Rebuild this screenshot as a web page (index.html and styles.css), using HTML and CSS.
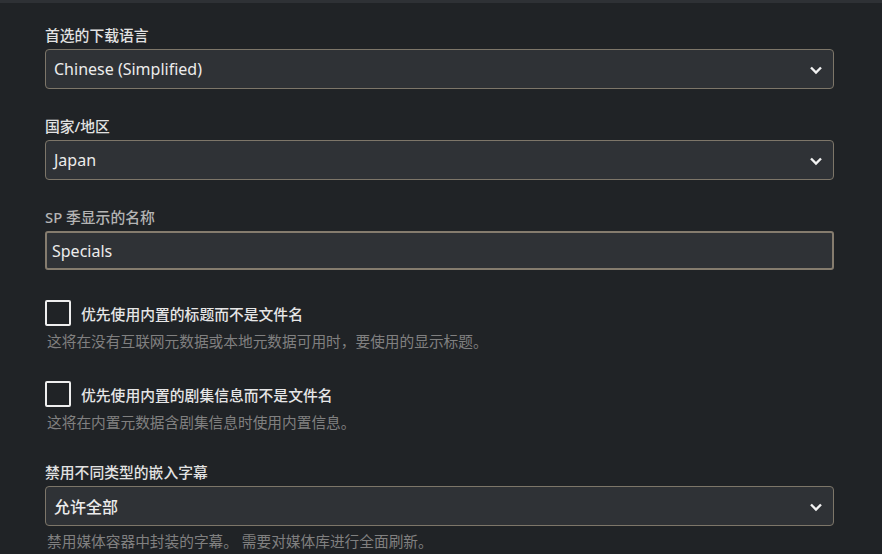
FILE: index.html
```html
<!DOCTYPE html>
<html lang="zh">
<head>
<meta charset="utf-8">
<link rel="stylesheet" href="styles.css">
</head>
<body>
<div class="topbar"></div>
<main class="form">
  <div class="field">
    <label class="label">首选的下载语言</label>
    <div class="select"><span>Chinese (Simplified)</span>
      <svg class="chev" width="14" height="10" viewBox="0 0 14 10"><path d="M2 2.5 L7 7.5 L12 2.5" fill="none" stroke="#f2f2f2" stroke-width="2.4"/></svg>
    </div>
  </div>
  <div class="field">
    <label class="label">国家/地区</label>
    <div class="select"><span>Japan</span>
      <svg class="chev" width="14" height="10" viewBox="0 0 14 10"><path d="M2 2.5 L7 7.5 L12 2.5" fill="none" stroke="#f2f2f2" stroke-width="2.4"/></svg>
    </div>
  </div>
  <div class="field">
    <label class="label dim">SP 季显示的名称</label>
    <div class="input"><span>Specials</span></div>
  </div>
  <div class="check-field">
    <div class="check-row"><span class="box"></span><span class="check-label">优先使用内置的标题而不是文件名</span></div>
    <div class="desc">这将在没有互联网元数据或本地元数据可用时，要使用的显示标题。</div>
  </div>
  <div class="check-field">
    <div class="check-row"><span class="box"></span><span class="check-label">优先使用内置的剧集信息而不是文件名</span></div>
    <div class="desc">这将在内置元数据含剧集信息时使用内置信息。</div>
  </div>
  <div class="field last">
    <label class="label">禁用不同类型的嵌入字幕</label>
    <div class="select"><span class="cjk">允许全部</span>
      <svg class="chev" width="14" height="10" viewBox="0 0 14 10"><path d="M2 2.5 L7 7.5 L12 2.5" fill="none" stroke="#f2f2f2" stroke-width="2.4"/></svg>
    </div>
    <div class="desc sub">禁用媒体容器中封装的字幕。 需要对媒体库进行全面刷新。</div>
  </div>
</main>
</body>
</html>
```

FILE: styles.css
```css
html, body {
  margin: 0;
  padding: 0;
  background: #202326;
  height: 554px;
  overflow: hidden;
}
body {
  font-family: "Noto Sans", "Noto Sans CJK SC", sans-serif;
  color: #e6e6e6;
}
.topbar {
  height: 3px;
  background: #2e3135;
}
.form {
  padding: 22px 0 0 45px;
  width: 789px;
}
.field {
  display: flex;
  flex-direction: column;
  margin-bottom: 27px;
}
.label {
  font-size: 14.8px;
  font-weight: 500;
  line-height: 20px;
  height: 20px;
  margin-bottom: 4px;
  color: #e2e2e2;
}
.label.dim {
  color: #b4b4b4;
}
.select {
  box-sizing: border-box;
  height: 40px;
  border: 1px solid #7d7669;
  border-radius: 4px;
  background: #2f3236;
  display: flex;
  align-items: center;
  justify-content: space-between;
  padding: 0 10px 0 8px;
  font-size: 16px;
  color: #ececec;
}
.cjk {
  font-weight: 500;
}
.input {
  box-sizing: border-box;
  height: 39px;
  border: 2px solid #857c6e;
  border-radius: 3px;
  background: #2f3236;
  display: flex;
  align-items: center;
  padding: 0 5px;
  font-size: 16px;
  color: #ececec;
}
.chev {
  display: block;
  margin-top: 1px;
}
.field:nth-of-type(3) {
  margin-bottom: 30px;
}
.check-field {
  margin-bottom: 30px;
}
.check-row {
  display: flex;
  align-items: center;
  height: 26px;
}
.box {
  box-sizing: border-box;
  width: 26px;
  height: 26px;
  border: 2px solid #eeeeee;
  border-radius: 2px;
}
.check-label {
  margin-left: 10px;
  font-size: 14.8px;
  font-weight: 500;
  color: #e6e6e6;
  padding-top: 1px;
}
.desc {
  font-size: 14.7px;
  line-height: 20px;
  margin-top: 5px;
  margin-left: 2px;
  color: #808080;
}
.desc.sub {
  margin-top: 5px;
}
```
